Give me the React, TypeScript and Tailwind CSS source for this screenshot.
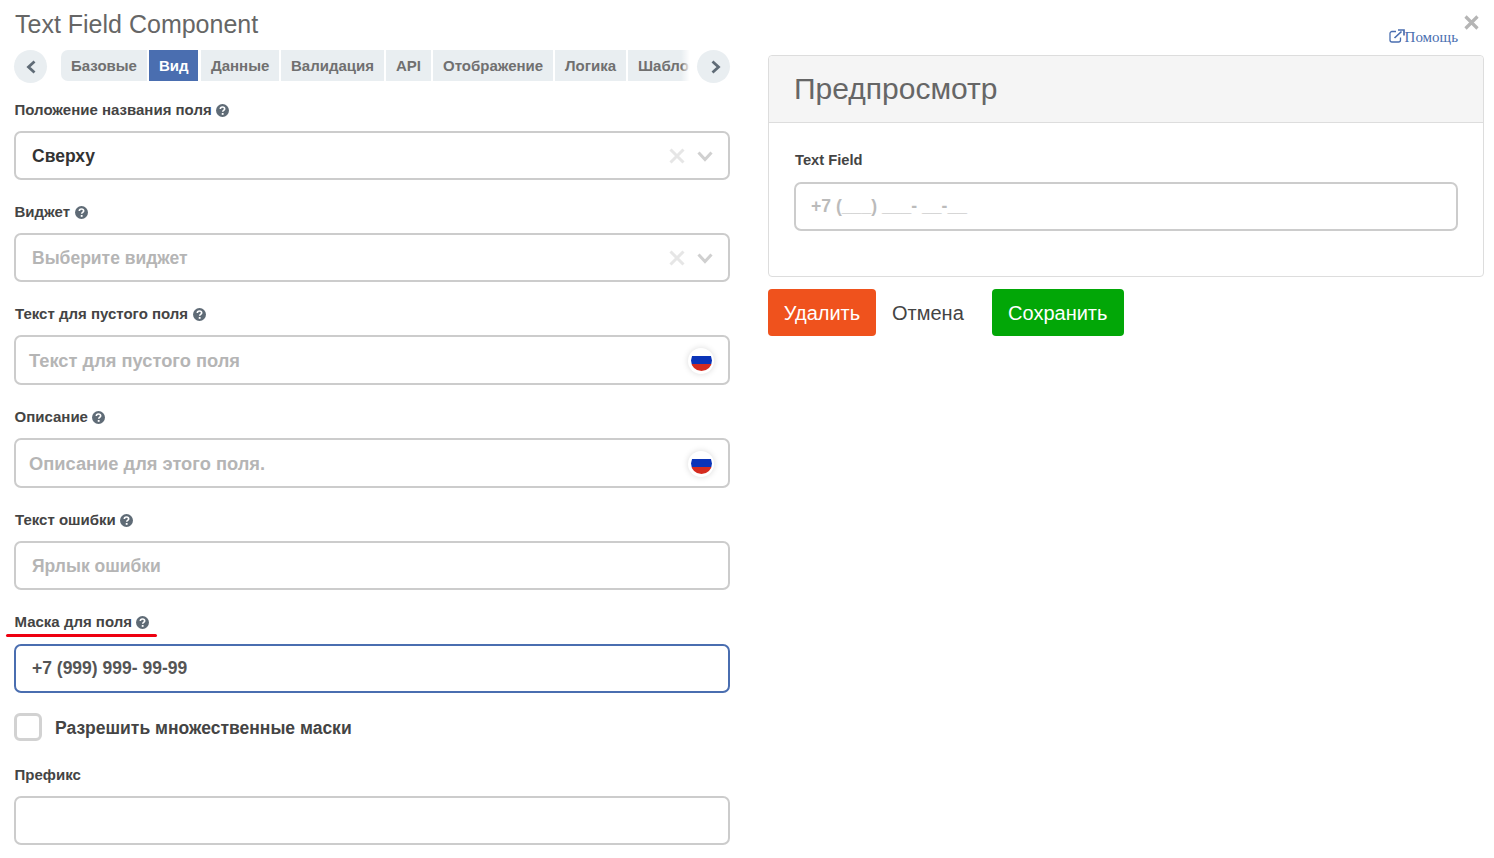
import React from "react";

const sans = { fontFamily: '"Liberation Sans", Arial, sans-serif' };

function Help() {
  return (
    <svg width="13" height="13" viewBox="0 0 24 24" className="ml-[4.5px] shrink-0">
      <circle cx="12" cy="12" r="12" fill="#5f6b76" />
      <path d="M8 9.2a4 3.6 0 0 1 8 0c0 2.6-3.6 2.8-3.6 5" fill="none" stroke="#fff" strokeWidth="3" />
      <rect x="10.6" y="16.6" width="3.4" height="3.4" fill="#fff" />
    </svg>
  );
}

function Label({ text, help = true, mt, ml = "ml-[0.5px]" }: { text: string; help?: boolean; mt: string; ml?: string }) {
  return (
    <div className={`flex items-center h-[20px] text-[15px] leading-[20px] font-bold text-[#444] ${mt} ${ml}`}>
      <span>{text}</span>
      {help && <Help />}
    </div>
  );
}

function Flag() {
  return (
    <span className="-mr-[1px] w-[26px] h-[26px] rounded-full bg-white shadow-[0_0_6px_rgba(0,0,0,0.15)] flex items-center justify-center">
      <svg width="21" height="21" viewBox="0 0 21 21">
        <defs>
          <clipPath id="flagclip">
            <circle cx="10.5" cy="10.5" r="10.5" />
          </clipPath>
        </defs>
        <g clipPath="url(#flagclip)">
          <rect x="0" y="0" width="21" height="6" fill="#ffffff" />
          <rect x="0" y="6" width="21" height="8" fill="#0b34b8" />
          <rect x="0" y="14" width="21" height="7" fill="#d52b1e" />
        </g>
      </svg>
    </span>
  );
}

function Box({
  children,
  h = "h-[49px]",
  border = "border-[#ccc]",
  mt = "mt-[11px]",
  pl = "pl-[16px]",
  pt = "pt-[1px]",
  size = "text-[17.5px]",
}: {
  children?: React.ReactNode;
  h?: string;
  border?: string;
  mt?: string;
  pl?: string;
  pt?: string;
  size?: string;
}) {
  return (
    <div className={`flex items-center ${h} ${mt} ${pl} pr-[15px] ${pt} border-2 ${border} rounded-[7px] bg-white ${size} font-bold`}>
      {children}
    </div>
  );
}

function SelectIcons() {
  return (
    <div className="ml-auto flex items-center gap-[12px]">
      <svg width="16" height="16" viewBox="0 0 16 16">
        <path d="M1.5 1.5 14.5 14.5M14.5 1.5 1.5 14.5" stroke="#e6e6e6" strokeWidth="3" />
      </svg>
      <svg width="16" height="11" viewBox="0 0 16 11">
        <path d="M1.5 1.5 8 8.5l6.5-7" fill="none" stroke="#d0d0d0" strokeWidth="3" />
      </svg>
    </div>
  );
}

function Arrow({ dir }: { dir: "l" | "r" }) {
  return (
    <button className="w-[33px] h-[33px] rounded-full bg-[#e9eef1] flex items-center justify-center shrink-0">
      <svg width="14" height="14" viewBox="0 0 14 14">
        <path
          d={dir === "l" ? "M10.5 1.5 4.5 7 10.5 12.5" : "M5.5 1.5 11.5 7 5.5 12.5"}
          fill="none"
          stroke="#5f6b76"
          strokeWidth="2.8"
        />
      </svg>
    </button>
  );
}

const tabs = [
  { t: "Базовые", w: "w-[86px]", extra: "rounded-l-[7px]" },
  { t: "Вид", w: "w-[49px] mr-[1px]", active: true },
  { t: "Данные", w: "w-[78px]" },
  { t: "Валидация", w: "w-[103px]" },
  { t: "API", w: "w-[45px]" },
  { t: "Отображение", w: "w-[120px]" },
  { t: "Логика", w: "w-[71px]" },
  { t: "Шаблон", w: "w-[74px]" },
];

export default function App() {
  return (
    <div className="relative w-[1494px] h-[858px] overflow-hidden bg-white flex pl-[14px] text-[#444]" style={sans}>
      <div className="w-[716px] shrink-0">
        <h1 className="h-[50px] pt-[9px] pl-[1px] text-[25px] leading-[30px] font-normal text-[#666]">Text Field Component</h1>
        <div className="flex items-start">
          <Arrow dir="l" />
          <div className="relative w-[630px] ml-[14px] h-[31px] flex gap-[2px] overflow-hidden">
            {tabs.map((x) => (
              <div
                key={x.t}
                className={`${x.w} ${x.extra ?? ""} shrink-0 h-[31px] flex items-center pt-[1px] px-[10px] text-[15px] font-bold whitespace-nowrap ${
                  x.active ? "bg-[#4a6eb0] text-white" : "bg-[#e9eef1] text-[#707070]"
                }`}
              >
                {x.t}
              </div>
            ))}
            <div className="absolute right-0 top-0 h-[31px] w-[9px] bg-gradient-to-r from-transparent to-white" />
          </div>
          <div className="ml-[7px]">
            <Arrow dir="r" />
          </div>
        </div>

        <Label text="Положение названия поля" mt="mt-[17px]" />
        <Box>
          <span className="text-[#333]">Сверху</span>
          <SelectIcons />
        </Box>

        <Label text="Виджет" mt="mt-[22px]" />
        <Box>
          <span className="text-[#b5b5b5]">Выберите виджет</span>
          <SelectIcons />
        </Box>

        <Label text="Текст для пустого поля" mt="mt-[22px]" ml="ml-[1px]" />
        <Box h="h-[50px]" pl="pl-[13px]" size="text-[18.3px]">
          <span className="text-[#b5b5b5]">Текст для пустого поля</span>
          <span className="ml-auto"><Flag /></span>
        </Box>

        <Label text="Описание" mt="mt-[22px]" />
        <Box h="h-[50px]" pl="pl-[13px]" size="text-[18.3px]">
          <span className="text-[#b5b5b5]">Описание для этого поля.</span>
          <span className="ml-auto"><Flag /></span>
        </Box>

        <Label text="Текст ошибки" mt="mt-[22px]" ml="ml-[1px]" />
        <Box>
          <span className="text-[#b5b5b5]">Ярлык ошибки</span>
        </Box>

        <Label text="Маска для поля" mt="mt-[22px]" />
        <Box border="border-[#4a6eb0]" mt="mt-[12px]" pt="pt-0">
          <span className="text-[#555]">+7 (999) 999- 99-99</span>
        </Box>

        <div className="flex items-center mt-[20px] h-[28px]">
          <span className="w-[28px] h-[28px] border-[3px] border-[#d2d2d2] rounded-[6px] bg-white" />
          <span className="ml-[13px] pt-[2px] text-[17.5px] font-bold text-[#444]">Разрешить множественные маски</span>
        </div>

        <Label text="Префикс" help={false} mt="mt-[24px]" />
        <Box mt="mt-[11px]" />
      </div>

      <div className="w-[716px] ml-[38px] shrink-0">
        <div className="h-[55px] flex items-start justify-end pr-[5px]">
          <a className="flex items-end mt-[29px] text-[15px] leading-[16px] text-[#4a6eb0]" style={{ fontFamily: '"Liberation Serif", serif' }}>
            <svg width="16" height="14" viewBox="0 0 16 14" className="mb-[2px]">
              <path d="M7 2.5H3a2 2 0 0 0-2 2V11a2 2 0 0 0 2 2h6.5a2 2 0 0 0 2-2V8.5" fill="none" stroke="#4a6eb0" strokeWidth="1.3" />
              <path d="M5.5 9 12.5 2.5M9 1h6v5.5" fill="none" stroke="#4a6eb0" strokeWidth="1.7" />
            </svg>
            Помощь
          </a>
          <svg width="15" height="15" viewBox="0 0 15 15" className="ml-[6px] mt-[15px]">
            <path d="M1.5 1.5 13.5 13.5M13.5 1.5 1.5 13.5" stroke="#b5b5b5" strokeWidth="3.2" />
          </svg>
        </div>

        <div className="border border-[#ddd] rounded-[4px] h-[222px]">
          <div className="h-[67px] pb-[2px] bg-[#f5f5f5] border-b border-[#ddd] rounded-t-[4px] flex items-center pl-[25px] text-[30px] text-[#666]">
            Предпросмотр
          </div>
          <div className="px-[25px]">
            <div className="mt-[27px] h-[20px] pl-[1px] text-[14.7px] leading-[20px] font-bold text-[#444]">Text Field</div>
            <div className="mt-[12px] h-[49px] border-2 border-[#ccc] rounded-[7px] flex items-center pl-[15px] text-[17.6px] font-bold text-[#bbb]">
              +7 (___) ___- __-__
            </div>
          </div>
        </div>

        <div className="flex items-center mt-[12px] text-[20px]">
          <button className="w-[108px] h-[47px] rounded-[4px] bg-[#ef521d] text-white">Удалить</button>
          <span className="ml-[16px] text-[#444]">Отмена</span>
          <button className="ml-[28px] w-[132px] h-[47px] rounded-[4px] bg-[#02a707] text-white">Сохранить</button>
        </div>
      </div>

      <div className="absolute left-[6px] top-[634px] w-[151px] h-[3px] rounded-full bg-[#ee0010]" />
    </div>
  );
}
